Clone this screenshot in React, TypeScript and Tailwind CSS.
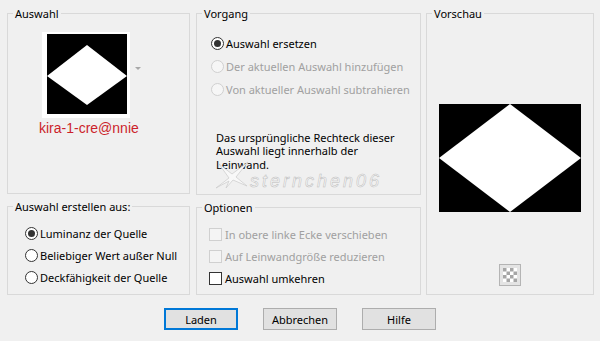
import type { ReactNode } from 'react'

function GroupBox({ title, className, children }: { title: string; className: string; children?: ReactNode }) {
  return (
    <fieldset className={`border border-[#d9d9d9] ${className}`}>
      <legend className="ml-[5px] px-[2px] leading-[13px] text-black">{title}</legend>
      {children}
    </fieldset>
  )
}

function Radio({ label, checked, disabled, row }: { label: string; checked?: boolean; disabled?: boolean; row: string }) {
  return (
    <div className={`flex items-center gap-[2px] ${row}`}>
      <span
        className={`flex h-[13px] w-[13px] items-center justify-center rounded-full border ${
          disabled ? 'border-[#d0d0d0] bg-[#f6f6f6]' : 'border-[#333333] bg-white'
        }`}
      >
        {checked && <span className="h-[7px] w-[7px] rounded-full bg-[#333333]" />}
      </span>
      <span className={disabled ? 'text-[#a0a0a0]' : 'text-black'}>{label}</span>
    </div>
  )
}

function Check({ label, disabled }: { label: string; disabled?: boolean }) {
  return (
    <div className="flex h-[22px] items-center gap-[3px]">
      <span
        className={`h-[13px] w-[13px] border ${disabled ? 'border-[#d0d0d0] bg-[#f4f4f4]' : 'border-[#333333] bg-white'}`}
      />
      <span className={disabled ? 'text-[#a0a0a0]' : 'text-black'}>{label}</span>
    </div>
  )
}

function Button({ label, focused }: { label: string; focused?: boolean }) {
  return (
    <button
      className={`flex h-[22px] w-[74px] items-center justify-center bg-[#e1e1e1] text-black ${
        focused ? 'border-2 border-[#0078d7]' : 'border border-[#adadad]'
      }`}
    >
      {label}
    </button>
  )
}

export default function App() {
  return (
    <div className="relative h-[341px] w-[600px] overflow-hidden bg-[#f0f0f0] font-['Noto_Sans',sans-serif] text-[11px] leading-[13px]">
      <div className="flex pl-[7px] pt-[7px]">
        <div className="flex w-[183px] flex-col gap-[6px]">
          <GroupBox title="Auswahl" className="h-[187px]">
            <div className="ml-[34px] mt-[12px] flex items-center">
              <div className="h-[86px] w-[88px] bg-white pl-[5px] pt-[2px]">
                <svg width="80" height="80" viewBox="0 0 80 80" className="block">
                  <rect width="80" height="80" fill="#000" />
                  <polygon points="40,11 80,42 40,71 0,42" fill="#fff" />
                </svg>
              </div>
              <svg width="6" height="4" viewBox="0 0 6 4" className="ml-[5px] mt-[-12px]">
                <polygon points="0,0 6,0 3,3" fill="#a8a8a8" />
              </svg>
            </div>
            <div className="ml-[31px] mt-[2px] font-['Liberation_Sans',sans-serif] text-[14px] leading-[16px] text-[#cc1f2b]">
              kira-1-cre@nnie
            </div>
          </GroupBox>
          <GroupBox title="Auswahl erstellen aus:" className="h-[95px]">
            <div className="ml-[17px] mt-[9px]">
              <Radio label="Luminanz der Quelle" checked row="h-[22px]" />
              <Radio label="Beliebiger Wert außer Null" row="h-[22px]" />
              <Radio label="Deckfähigkeit der Quelle" row="h-[22px]" />
            </div>
          </GroupBox>
        </div>

        <div className="ml-[6px] flex w-[225px] flex-col gap-[6px]">
          <GroupBox title="Vorgang" className="h-[188px]">
            <div className="ml-[14px] mt-[12px]">
              <Radio label="Auswahl ersetzen" checked row="h-[23px]" />
              <Radio label="Der aktuellen Auswahl hinzufügen" disabled row="h-[23px]" />
              <Radio label="Von aktueller Auswahl subtrahieren" disabled row="h-[23px]" />
            </div>
            <p className="ml-[19px] mt-[30px] w-[190px] leading-[13.4px] text-black">
              Das ursprüngliche Rechteck dieser Auswahl liegt innerhalb der Leinwand.
            </p>
          </GroupBox>
          <GroupBox title="Optionen" className="h-[94px]">
            <div className="ml-[12px] mt-[9px]">
              <Check label="In obere linke Ecke verschieben" disabled />
              <Check label="Auf Leinwandgröße reduzieren" disabled />
              <Check label="Auswahl umkehren" />
            </div>
          </GroupBox>
        </div>

        <GroupBox title="Vorschau" className="ml-[5px] flex h-[288px] w-[168px] flex-col items-center">
          <div className="flex flex-col items-center">
            <svg width="142" height="108" viewBox="0 0 142 108" className="mt-[84px] block">
              <rect width="142" height="108" fill="#000" />
              <polygon points="71,0 142,54 71,108 0,54" fill="#fff" />
            </svg>
            <svg width="22" height="22" viewBox="0 0 22 22" className="mt-[52px] block">
              <rect x="0.5" y="0.5" width="21" height="21" fill="#e4e4e4" stroke="#b4b4b4" />
              <rect x="4" y="4" width="14" height="14" fill="#fff" />
              <g fill="#a6a6a6">
                <rect x="4" y="4" width="3.5" height="3.5" />
                <rect x="11" y="4" width="3.5" height="3.5" />
                <rect x="7.5" y="7.5" width="3.5" height="3.5" />
                <rect x="14.5" y="7.5" width="3.5" height="3.5" />
                <rect x="4" y="11" width="3.5" height="3.5" />
                <rect x="11" y="11" width="3.5" height="3.5" />
                <rect x="7.5" y="14.5" width="3.5" height="3.5" />
                <rect x="14.5" y="14.5" width="3.5" height="3.5" />
              </g>
            </svg>
          </div>
        </GroupBox>
      </div>

      <div className="mt-[13px] flex justify-center gap-[25px]">
        <Button label="Laden" focused />
        <Button label="Abbrechen" />
        <Button label="Hilfe" />
      </div>

      {/* watermark */}
      <div className="pointer-events-none absolute left-[214px] top-[161px] flex items-end">
        <svg width="36" height="28" viewBox="0 0 36 28">
          <polygon
            points="2,27 15,17 5,3 18,13 34,1 22,16 33,25 19,19 12,27 15,20"
            fill="#f8f8f8"
            stroke="#cacaca"
            strokeWidth="0.7"
          />
        </svg>
        <span className="mb-[1px] font-['Liberation_Sans',sans-serif] text-[18px] italic leading-[14px] tracking-[3px] text-[#f7f7f7] [-webkit-text-stroke:0.5px_#bcbcbc]">
          sternchen06
        </span>
      </div>
    </div>
  )
}
